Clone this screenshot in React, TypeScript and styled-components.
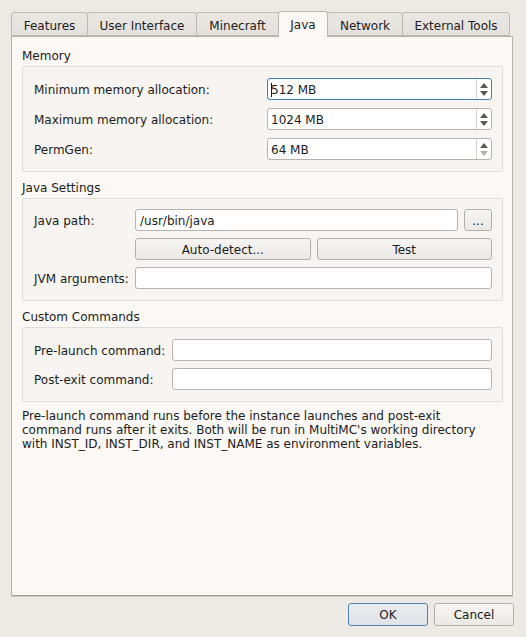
import React from "react";
import styled, { createGlobalStyle, css } from "styled-components";

const Global = createGlobalStyle`
  html, body { margin: 0; padding: 0; background: #edeae6; }
  body { font-family: "DejaVu Sans", "Liberation Sans", sans-serif; font-size: 12px; color: #1c1c1c; }
`;

const Window = styled.div`
  width: 526px;
  height: 637px;
  box-sizing: border-box;
  padding: 11px 13px 11px 11px;
  display: flex;
  flex-direction: column;
  background: #edeae6;
`;

const TabBar = styled.div`
  display: flex;
  align-items: flex-end;
  height: 25px;
  position: relative;
  z-index: 1;
`;

const Tab = styled.div<{ $active?: boolean; $w: number }>`
  box-sizing: border-box;
  width: ${(p) => p.$w}px;
  height: ${(p) => (p.$active ? 26 : 24)}px;
  margin-right: -1px;
  margin-bottom: ${(p) => (p.$active ? -1 : 0)}px;
  border: 1px solid #bcb8b4;
  border-bottom: ${(p) => (p.$active ? "none" : "1px solid #bcb8b4")};
  border-radius: 3px 3px 0 0;
  background: ${(p) => (p.$active ? "#fbf8f5" : "linear-gradient(#eae7e3, #e4e1dd)")};
  display: flex;
  align-items: center;
  justify-content: center;
  padding-top: ${(p) => (p.$active ? 1 : 3)}px;
  white-space: nowrap;
  color: #1c1c1c;
  position: relative;
  z-index: ${(p) => (p.$active ? 2 : 1)};
`;

const Pane = styled.div`
  flex: 1;
  box-sizing: border-box;
  background: #fbf8f5;
  border: 1px solid #b5b1ad;
  border-bottom-color: #a09c98;
  box-shadow: 0 1px 0 #cfcbc7;
  padding: 10px 9px 0 10px;
  display: flex;
  flex-direction: column;
`;

const SectionTitle = styled.div<{ $top: number }>`
  line-height: 16px;
  height: 16px;
  padding-top: 1px;
  box-sizing: border-box;
  margin-top: ${(p) => p.$top}px;
  margin-bottom: 3px;
  white-space: nowrap;
`;

const Group = styled.div<{ $pt: number; $pb: number; $gap: number; $labelW: number }>`
  box-sizing: border-box;
  background: #f7f4f1;
  border: 1px solid #e0dcd8;
  border-radius: 2px;
  padding: ${(p) => p.$pt}px 10px ${(p) => p.$pb}px 11px;
  display: grid;
  grid-template-columns: ${(p) => p.$labelW}px 1fr;
  row-gap: ${(p) => p.$gap}px;
  align-items: center;
`;

const Label = styled.div`
  line-height: 16px;
  padding-top: 2px;
  white-space: nowrap;
`;

const fieldBase = css`
  box-sizing: border-box;
  height: 22px;
  background: #ffffff;
  border: 1px solid #b6b2ae;
  border-radius: 3px;
  font-family: inherit;
  font-size: 12px;
  color: #1c1c1c;
`;

const TextField = styled.div`
  ${fieldBase};
  display: flex;
  align-items: center;
  padding: 1px 4px 0;
  flex: 1;
  white-space: nowrap;
`;

const SpinBox = styled.div<{ $focus?: boolean }>`
  ${fieldBase};
  display: flex;
  align-items: stretch;
  border-color: ${(p) => (p.$focus ? "#3f7fb5" : "#b6b2ae")};
`;

const SpinText = styled.div`
  flex: 1;
  display: flex;
  align-items: center;
  padding: 1px 0 0 3px;
  white-space: nowrap;
`;

const Caret = styled.span`
  display: inline-block;
  width: 1px;
  height: 14px;
  background: #1c1c1c;
  margin-right: -1px;
  position: relative;
  z-index: 1;
`;

const SpinButtons = styled.div`
  width: 14px;
  border-left: 1px solid #d6d2ce;
  display: flex;
  flex-direction: column;
  align-items: center;
  justify-content: center;
  gap: 3px;
`;

const Arrow = styled.div<{ $down?: boolean; $dim?: boolean }>`
  width: 0;
  height: 0;
  border-left: 4px solid transparent;
  border-right: 4px solid transparent;
  ${(p) =>
    p.$down
      ? `border-top: 5px solid ${p.$dim ? "#b3b0ad" : "#5a5856"};`
      : `border-bottom: 5px solid ${p.$dim ? "#b3b0ad" : "#5a5856"};`}
`;

const Row = styled.div`
  display: flex;
  gap: 6px;
`;

const Button = styled.div<{ $w?: number; $h?: number; $default?: boolean }>`
  box-sizing: border-box;
  height: ${(p) => p.$h ?? 23}px;
  ${(p) => (p.$w ? `width: ${p.$w}px;` : "flex: 1;")}
  border: 1px solid ${(p) => (p.$default ? "#4a85b6" : "#b3afab")};
  border-radius: 3px;
  background: ${(p) =>
    p.$default ? "linear-gradient(#e9ecef, #dfe4e8)" : "linear-gradient(#f7f5f3, #ebe8e5)"};
  display: flex;
  align-items: center;
  justify-content: center;
  padding-top: 1px;
  color: #1c1c1c;
  white-space: nowrap;
`;

const Note = styled.div`
  margin-top: 7px;
  line-height: 14px;
  color: #1c1c1c;
  white-space: nowrap;
`;

const Footer = styled.div`
  display: flex;
  justify-content: flex-end;
  gap: 6px;
  margin-top: 7px;
  margin-right: -1px;
`;

const Spin = ({ value, focus, minDim }: { value: string; focus?: boolean; minDim?: boolean }) => (
  <SpinBox $focus={focus}>
    <SpinText>
      {focus && <Caret />}
      {value}
    </SpinText>
    <SpinButtons>
      <Arrow />
      <Arrow $down $dim={minDim} />
    </SpinButtons>
  </SpinBox>
);

const tabs: [string, number][] = [
  ["Features", 77],
  ["User Interface", 110],
  ["Minecraft", 83],
  ["Java", 50],
  ["Network", 76],
  ["External Tools", 108],
];

export default function App() {
  return (
    <Window>
      <Global />
      <TabBar>
        {tabs.map(([t, w]) => (
          <Tab key={t} $w={w} $active={t === "Java"}>
            {t}
          </Tab>
        ))}
      </TabBar>
      <Pane>
        <SectionTitle $top={0}>Memory</SectionTitle>
        <Group $pt={11} $pb={11} $gap={8} $labelW={233}>
          <Label>Minimum memory allocation:</Label>
          <Spin value="512 MB" focus />
          <Label>Maximum memory allocation:</Label>
          <Spin value="1024 MB" />
          <Label>PermGen:</Label>
          <Spin value="64 MB" minDim />
        </Group>

        <SectionTitle $top={7}>Java Settings</SectionTitle>
        <Group $pt={10} $pb={11} $gap={7} $labelW={101}>
          <Label>Java path:</Label>
          <Row>
            <TextField>/usr/bin/java</TextField>
            <Button $w={28} $h={22}>...</Button>
          </Row>
          <div />
          <Row>
            <Button $h={22}>Auto-detect...</Button>
            <Button $h={22}>Test</Button>
          </Row>
          <Label>JVM arguments:</Label>
          <TextField />
        </Group>

        <SectionTitle $top={7}>Custom Commands</SectionTitle>
        <Group $pt={11} $pb={11} $gap={7} $labelW={138}>
          <Label>Pre-launch command:</Label>
          <TextField />
          <Label>Post-exit command:</Label>
          <TextField />
        </Group>

        <Note>
          Pre-launch command runs before the instance launches and post-exit
          <br />
          command runs after it exits. Both will be run in MultiMC's working directory
          <br />
          with INST_ID, INST_DIR, and INST_NAME as environment variables.
        </Note>
      </Pane>
      <Footer>
        <Button $w={80} $default>
          OK
        </Button>
        <Button $w={80}>Cancel</Button>
      </Footer>
    </Window>
  );
}
